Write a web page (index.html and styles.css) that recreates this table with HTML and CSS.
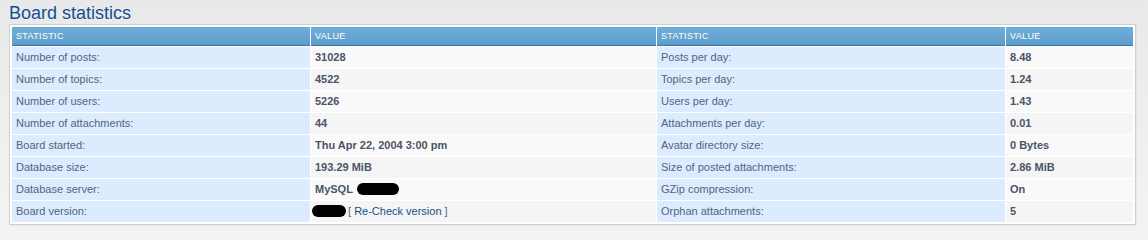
FILE: index.html
```html
<!DOCTYPE html>
<html>
<head>
<meta charset="utf-8">
<link rel="stylesheet" href="styles.css">
</head>
<body>
<div class="page">
  <h1 class="title">Board statistics</h1>
  <table class="stats">
    <colgroup>
      <col class="c1"><col class="c2"><col class="c3"><col class="c4">
    </colgroup>
    <thead>
      <tr><th>Statistic</th><th>Value</th><th>Statistic</th><th>Value</th></tr>
    </thead>
    <tbody>
      <tr class="row1"><td class="lbl">Number of posts:</td><td class="val">31028</td><td class="lbl">Posts per day:</td><td class="val">8.48</td></tr>
      <tr class="row2"><td class="lbl">Number of topics:</td><td class="val">4522</td><td class="lbl">Topics per day:</td><td class="val">1.24</td></tr>
      <tr class="row1"><td class="lbl">Number of users:</td><td class="val">5226</td><td class="lbl">Users per day:</td><td class="val">1.43</td></tr>
      <tr class="row2"><td class="lbl">Number of attachments:</td><td class="val">44</td><td class="lbl">Attachments per day:</td><td class="val">0.01</td></tr>
      <tr class="row1"><td class="lbl">Board started:</td><td class="val">Thu Apr 22, 2004 3:00 pm</td><td class="lbl">Avatar directory size:</td><td class="val">0 Bytes</td></tr>
      <tr class="row2"><td class="lbl">Database size:</td><td class="val">193.29 MiB</td><td class="lbl">Size of posted attachments:</td><td class="val">2.86 MiB</td></tr>
      <tr class="row1"><td class="lbl">Database server:</td><td class="val">MySQL <span class="redact r1"></span></td><td class="lbl">GZip compression:</td><td class="val">On</td></tr>
      <tr class="row2"><td class="lbl">Board version:</td><td class="val"><span class="redact r2"></span><span class="recheck">[ <a href="#">Re-Check version</a> ]</span></td><td class="lbl">Orphan attachments:</td><td class="val">5</td></tr>
    </tbody>
  </table>
</div>
</body>
</html>
```

FILE: styles.css
```css
html, body {
  margin: 0;
  padding: 0;
}
body {
  background: linear-gradient(#e9e9e9, #f3f3f3 220px);
  min-height: 240px;
  font-family: "Liberation Sans", Arial, sans-serif;
}
.page {
  padding: 0 12px 0 9px;
}
.title {
  margin: 0;
  padding-top: 2px;
  height: 22px;
  font-size: 18px;
  line-height: 22px;
  font-weight: normal;
  color: #115098;
}
.stats {
  width: 1127px;
  border: 1px solid #cccfd3;
  background: #ffffff;
  padding: 1px;
  border-spacing: 1px;
  box-shadow: 1px 1px 1px rgba(0,0,0,0.04);
}
.c1 { width: 298px; }
.c2 { width: 345px; }
.c3 { width: 348px; }
.c4 { width: auto; }
.stats th {
  padding: 3px 4px;
  height: 11px;
  font-size: 9px;
  line-height: 11px;
  font-weight: normal;
  color: #ffffff;
  text-transform: uppercase;
  text-align: left;
  background: linear-gradient(#6eaedb, #5f9cc9);
  border-top: 1px solid #6dacd2;
  border-bottom: 1px solid #327aa5;
  letter-spacing: 0.35px;
}
.stats td {
  padding: 4px;
  height: 13px;
  font-size: 11px;
  line-height: 13px;
  text-align: left;
  white-space: nowrap;
}
.stats td.lbl {
  background: #dcebfe;
  color: #536482;
}
.stats td.val {
  font-weight: bold;
  color: #4a5468;
}
.row1 td.val { background: #f9f9f9; }
.row2 td.val { background: #f5f5f5; }
.redact {
  display: inline-block;
  background: #000;
  border-radius: 7px;
  vertical-align: -2px;
}
.r1 {
  width: 42px;
  height: 12px;
  margin-left: 1px;
}
.r2 {
  width: 34px;
  height: 12px;
  margin-left: -3px;
}
.recheck {
  font-weight: normal;
  color: #536482;
  margin-left: 2px;
}
.recheck a {
  color: #105289;
  text-decoration: none;
}
```
